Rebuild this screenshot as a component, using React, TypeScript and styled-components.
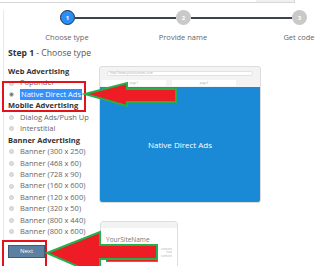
import * as React from "react"
import styled, { createGlobalStyle } from "styled-components"

const GlobalStyle = createGlobalStyle`
  html, body {
    margin: 0;
    padding: 0;
    background: #ffffff;
    overflow: hidden;
  }
  body {
    font-family: "Open Sans", "Liberation Sans", sans-serif;
    color: #555555;
  }
`

const steps = ["Choose type", "Provide name", "Get code"]

const groups = [
  { title: "Web Advertising", items: ["Popunder", "Native Direct Ads"] },
  { title: "Mobile Advertising", items: ["Dialog Ads/Push Up", "Interstitial"] },
  {
    title: "Banner Advertising",
    items: [
      "Banner (300 x 250)",
      "Banner (468 x 60)",
      "Banner (728 x 90)",
      "Banner (160 x 600)",
      "Banner (120 x 600)",
      "Banner (320 x 50)",
      "Banner (800 x 440)",
      "Banner (800 x 600)",
    ],
  },
]

const App: React.FunctionComponent = () => {
  return (
    <Page>
      <GlobalStyle />
      <TopBar>
        <TopButton />
      </TopBar>
      <Panel>
        <StepTrack>
          <Circle active>1</Circle>
          <Connector />
          <Circle>2</Circle>
          <Connector />
          <Circle>3</Circle>
        </StepTrack>
        <StepLabels>
          {steps.map((s) => (
            <StepLabel key={s}>{s}</StepLabel>
          ))}
        </StepLabels>
        <StepTitle>
          <b>Step 1</b> - Choose type
        </StepTitle>
        <Body>
          <Options>
            {groups.map((g) => (
              <React.Fragment key={g.title}>
                <GroupTitle>{g.title}</GroupTitle>
                {g.items.map((item) => {
                  const selected = item === "Native Direct Ads"
                  return (
                    <Option key={item}>
                      <Radio checked={selected} />
                      {selected ? <Selected>{item}</Selected> : item}
                    </Option>
                  )
                })}
              </React.Fragment>
            ))}
            <NextButton>Next</NextButton>
          </Options>
          <Previews>
            <BrowserCard>
              <AddressBar>http://www.yoursitename.com</AddressBar>
              <Tabs>
                <Tab>page1</Tab>
                <Tab>page2</Tab>
              </Tabs>
              <BlueScreen>Native Direct Ads</BlueScreen>
            </BrowserCard>
            <SiteCard>
              <SiteHeader />
              <SiteName>YourSiteName</SiteName>
              <SiteRow>
                <AdBlock />
                <TinyText>
                  <span>content</span>
                  <span>text</span>
                  <span>content</span>
                </TinyText>
              </SiteRow>
            </SiteCard>
          </Previews>
        </Body>
      </Panel>

      <Highlight style={{ left: 2, top: 81, width: 80, height: 27 }} />
      <Highlight style={{ left: 2, top: 240, width: 41, height: 27 }} />

      <Arrows width="320" height="266" viewBox="0 0 320 266">
        <polygon
          points="85,94 127,83 127,89 176,89 176,102 127,102 127,106"
          fill="#ee1c24"
          stroke="#22b14c"
          strokeWidth="2"
          strokeLinejoin="miter"
        />
        <polygon
          points="47,253 100,232 100,245 157,245 157,259 100,259 100,276"
          fill="#ee1c24"
          stroke="#22b14c"
          strokeWidth="2"
          strokeLinejoin="miter"
        />
      </Arrows>
    </Page>
  )
}

const Page = styled.div`
  position: relative;
  width: 320px;
  height: 266px;
  overflow: hidden;
`

const TopBar = styled.div`
  width: 294px;
  height: 2px;
  border-bottom: 1px solid #d8d8d8;
  border-right: 1px solid #d8d8d8;
  display: flex;
  justify-content: flex-end;
`

const TopButton = styled.div`
  width: 38px;
  height: 2px;
  background: #f0f0f0;
`

const Panel = styled.div`
  margin-left: 3px;
  margin-top: 7px;
  border-left: 1px solid #e8e8e8;
  padding-left: 4px;
`

const StepTrack = styled.div`
  display: flex;
  align-items: center;
  margin-left: 52px;
`

const Circle = styled.div<{ active?: boolean }>`
  width: 15px;
  height: 15px;
  flex: none;
  box-sizing: border-box;
  border-radius: 50%;
  background: ${(p) => (p.active ? "#2b8ef2" : "#c9c9c9")};
  border: ${(p) => (p.active ? "1.5px solid #1c2c4a" : "none")};
  color: #ffffff;
  font-size: 6px;
  font-weight: bold;
  display: flex;
  align-items: center;
  justify-content: center;
`

const Connector = styled.div`
  width: 101px;
  height: 2px;
  background: #3a4552;
`

const StepLabels = styled.div`
  display: grid;
  grid-template-columns: 116px 116px 116px;
  margin-left: 1px;
  margin-top: 6px;
`

const StepLabel = styled.div`
  text-align: center;
  font-size: 7.5px;
  line-height: 12px;
  color: #666666;
`

const StepTitle = styled.div`
  font-size: 8.6px;
  line-height: 13px;
  margin-top: 4px;
  color: #555555;

  b {
    color: #333333;
    font-weight: 700;
  }
`

const Body = styled.div`
  display: flex;
  margin-top: 6px;
`

const Options = styled.div`
  width: 91px;
  flex: none;
`

const GroupTitle = styled.div`
  font-size: 7.5px;
  line-height: 11.43px;
  font-weight: 700;
  color: #333333;
  white-space: nowrap;
`

const Option = styled.div`
  display: flex;
  align-items: center;
  font-size: 7.5px;
  line-height: 11.43px;
  color: #666666;
  white-space: nowrap;
`

const Radio = styled.span<{ checked?: boolean }>`
  width: 5px;
  height: 5px;
  flex: none;
  border-radius: 50%;
  margin: 0 6px 0 1px;
  box-sizing: border-box;
  background: ${(p) => (p.checked ? "#777777" : "#dddddd")};
  border: 1px solid ${(p) => (p.checked ? "#cfcfcf" : "#d0d0d0")};
`

const Selected = styled.span`
  background: #3390ff;
  color: #ffffff;
  padding: 0 1px;
`

const NextButton = styled.button`
  display: block;
  width: 37px;
  height: 13px;
  margin-top: 7px;
  padding: 0;
  border: 1px solid #3d5a76;
  background: #5b80a1;
  color: #ffffff;
  font-family: "Open Sans", "Liberation Sans", sans-serif;
  font-size: 6px;
`

const Previews = styled.div`
  display: flex;
  flex-direction: column;
  align-items: flex-start;
  gap: 18px;
`

const BrowserCard = styled.div`
  width: 162px;
  height: 137px;
  box-sizing: border-box;
  background: #f3f3f3;
  border: 1px solid #dddddd;
  border-radius: 3px;
  display: flex;
  flex-direction: column;
  align-items: center;
  overflow: hidden;
`

const AddressBar = styled.div`
  width: 146px;
  height: 5px;
  margin-top: 4px;
  box-sizing: border-box;
  background: #ffffff;
  border: 1px solid #e2e2e2;
  border-radius: 2px;
  font-size: 3px;
  line-height: 3px;
  color: #aaaaaa;
  padding-left: 2px;
`

const Tabs = styled.div`
  display: flex;
  gap: 6px;
  margin-top: 4px;
  align-self: flex-end;
  margin-right: 24px;
`

const Tab = styled.div`
  width: 64px;
  height: 6px;
  background: #ffffff;
  font-size: 3px;
  line-height: 6px;
  text-align: center;
  color: #aaaaaa;
`

const BlueScreen = styled.div`
  align-self: stretch;
  flex: 1;
  margin-top: 1px;
  background: #1a8ad7;
  color: #ffffff;
  font-size: 8px;
  display: flex;
  align-items: center;
  justify-content: center;
`

const SiteCard = styled.div`
  width: 78px;
  height: 60px;
  margin-left: 1px;
  box-sizing: border-box;
  background: #ffffff;
  border: 1px solid #dddddd;
  border-radius: 3px;
  padding: 0 5px;
`

const SiteHeader = styled.div`
  height: 6px;
  margin: 0 -5px;
  background: #f3f3f3;
`

const SiteName = styled.div`
  font-size: 6.5px;
  line-height: 8px;
  margin-top: 8px;
  color: #777777;
`

const SiteRow = styled.div`
  display: flex;
  gap: 3px;
  margin-top: 2px;
`

const AdBlock = styled.div`
  width: 50px;
  height: 14px;
  background: #ee1c24;
  border: 1px solid #22b14c;
`

const TinyText = styled.div`
  display: flex;
  flex-direction: column;
  align-items: flex-end;
  font-size: 3px;
  line-height: 3.4px;
  color: #aaaaaa;
  padding-top: 2px;
`

const Highlight = styled.div`
  position: absolute;
  border: 2px solid #e4121a;
`

const Arrows = styled.svg`
  position: absolute;
  left: 0;
  top: 0;
  pointer-events: none;
`

export default App
